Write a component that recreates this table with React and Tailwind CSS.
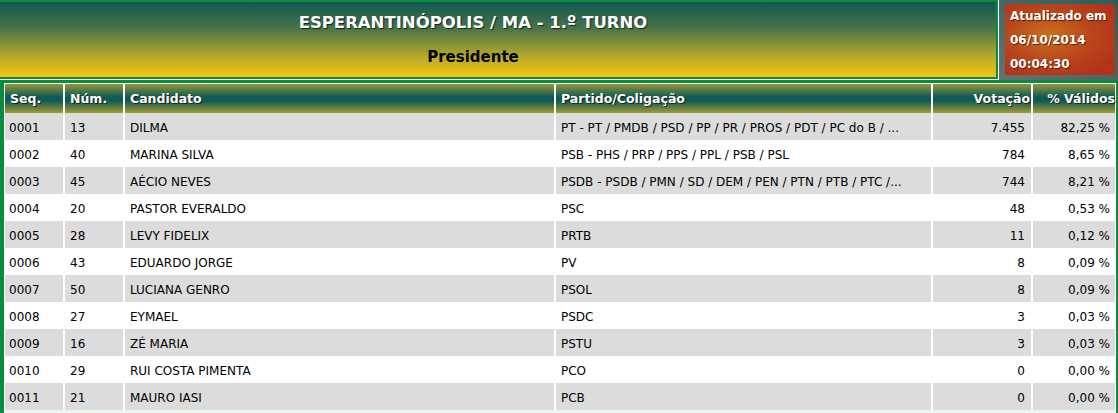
const rows = [
  ["0001", "13", "DILMA", "PT - PT / PMDB / PSD / PP / PR / PROS / PDT / PC do B / ...", "7.455", "82,25 %"],
  ["0002", "40", "MARINA SILVA", "PSB - PHS / PRP / PPS / PPL / PSB / PSL", "784", "8,65 %"],
  ["0003", "45", "AÉCIO NEVES", "PSDB - PSDB / PMN / SD / DEM / PEN / PTN / PTB / PTC /...", "744", "8,21 %"],
  ["0004", "20", "PASTOR EVERALDO", "PSC", "48", "0,53 %"],
  ["0005", "28", "LEVY FIDELIX", "PRTB", "11", "0,12 %"],
  ["0006", "43", "EDUARDO JORGE", "PV", "8", "0,09 %"],
  ["0007", "50", "LUCIANA GENRO", "PSOL", "8", "0,09 %"],
  ["0008", "27", "EYMAEL", "PSDC", "3", "0,03 %"],
  ["0009", "16", "ZÉ MARIA", "PSTU", "3", "0,03 %"],
  ["0010", "29", "RUI COSTA PIMENTA", "PCO", "0", "0,00 %"],
  ["0011", "21", "MAURO IASI", "PCB", "0", "0,00 %"],
];

const cols = "grid grid-cols-[58px_58px_429px_375px_98px_82px] gap-x-[2px]";
const headCell =
  "h-[29px] flex items-center px-[5px] pt-[2px] text-white font-bold text-[12.5px] [text-shadow:1px_1px_1px_#1a1a1a] bg-[linear-gradient(to_bottom,#959638_0%,#0e5a55_45%,#0e5a55_58%,#a39b32_100%)]";

function App() {
  return (
    <div className="w-[1118px] h-[413px] overflow-hidden bg-[#0a8c3e] font-['DejaVu_Sans',sans-serif]">
      <div className="flex h-[80px]">
        <div className="w-[999px] border-r border-b border-white">
          <div className="flex h-full flex-col items-center border-t-2 border-r-2 border-b-2 border-[#0a8c3e] bg-[linear-gradient(to_bottom,#0e5853_0%,#4a7348_35%,#b3a82a_72%,#f5c712_100%)] pr-[50px] pt-[11px]">
            <div className="text-[16.5px] font-bold leading-[20px] text-white [text-shadow:1px_1px_1px_#0a2a20]">
              ESPERANTINÓPOLIS / MA - 1.º TURNO
            </div>
            <div className="mt-[14px] text-[15px] font-bold leading-[20px] text-black">
              Presidente
            </div>
          </div>
        </div>
        <div className="flex-1 bg-[linear-gradient(to_bottom_left,#2a5e58,#657270)] pl-[6px] pt-[4px]">
          <div className="h-[71px] w-[110px] bg-[radial-gradient(ellipse_at_40%_45%,#c9721f_0%,#b9471b_45%,#b2331a_80%)] pl-[5px] text-[12px] font-bold leading-[24px] text-white [text-shadow:1px_1px_1px_#5a1a08]">
            <div>Atualizado em</div>
            <div>06/10/2014</div>
            <div>00:04:30</div>
          </div>
        </div>
      </div>

      <div className="ml-[4px] mt-[3px] w-[1112px] bg-white px-[1px] pt-[1px]">
        <div className={cols}>
          <div className={headCell}>Seq.</div>
          <div className={headCell}>Núm.</div>
          <div className={headCell}>Candidato</div>
          <div className={headCell}>Partido/Coligação</div>
          <div className={headCell + " justify-end !pr-[1px]"}>Votação</div>
          <div className={headCell + " justify-end !pr-0"}>% Válidos</div>
        </div>
        {rows.map((r, i) => {
          const bg = i % 2 === 0 ? "bg-[#dcdcdc]" : "bg-white";
          const cell = `h-[27px] flex items-center pt-[2px] whitespace-nowrap overflow-hidden text-[12px] text-black ${bg}`;
          return (
            <div key={r[0]} className={cols}>
              <div className={cell + " pl-[4px]"}>{r[0]}</div>
              <div className={cell + " pl-[5px]"}>{r[1]}</div>
              <div className={cell + " pl-[5px]"}>{r[2]}</div>
              <div className={cell + " pl-[5px]"}>{r[3]}</div>
              <div className={cell + " justify-end pr-[6px]"}>{r[4]}</div>
              <div className={cell + " justify-end pr-[5px]"}>{r[5]}</div>
            </div>
          );
        })}
        <div className="h-[3px] bg-[#eef5ef]" />
      </div>
    </div>
  );
}

export default App;
